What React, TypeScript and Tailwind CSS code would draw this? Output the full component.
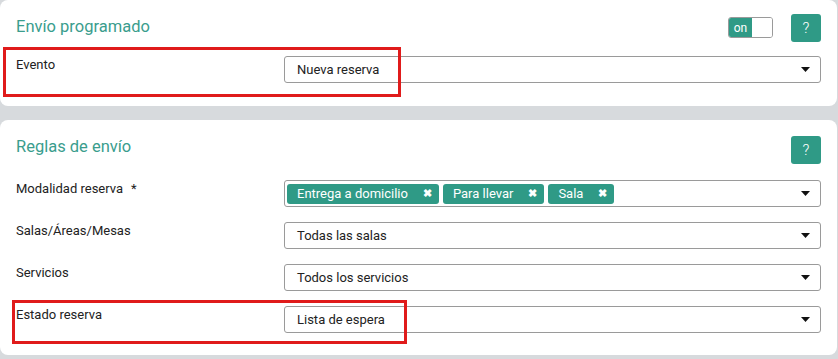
import React from "react";

const font = { fontFamily: "Roboto, 'Liberation Sans', sans-serif" };

function Caret() {
  return (
    <svg width="9" height="5" viewBox="0 0 9 5" className="shrink-0">
      <path d="M0 0 L9 0 L4.5 5 Z" fill="#111" />
    </svg>
  );
}

function Select({ value }: { value: string }) {
  return (
    <div className="flex-1 h-[27px] border border-[#9a9a9a] rounded-[3px] bg-white flex items-center pl-3 pr-[10px]">
      <span className="flex-1 text-[13px] text-[#222] pt-[1px]">{value}</span>
      <Caret />
    </div>
  );
}

function Tag({ text }: { text: string }) {
  return (
    <div className="h-[20px] bg-[#2f9a86] rounded-[3px] flex items-center pl-[10px] pr-[7px] gap-[15px] text-white text-[13px]">
      <span>{text}</span>
      <span className="text-[11px] font-bold leading-none">✖</span>
    </div>
  );
}

function HelpBtn() {
  return (
    <div className="w-[30px] h-[28px] bg-[#2f9a86] rounded-[3px] flex items-center justify-center text-white text-[15px] font-light">
      ?
    </div>
  );
}

function Row({ label, children, highlight }: { label: React.ReactNode; children: React.ReactNode; highlight?: "a" | "b" }) {
  return (
    <div className="relative flex items-start">
      <div className="w-[268px] text-[13px] leading-[17px] text-[#222]">{label}</div>
      {children}
      {highlight === "a" && (
        <div className="absolute left-[-13px] top-[-9px] w-[398px] h-[50px] border-[3px] border-[#e01b1b] pointer-events-none" />
      )}
      {highlight === "b" && (
        <div className="absolute left-[-4px] top-[-6px] w-[395px] h-[44px] border-[3px] border-[#e01b1b] pointer-events-none" />
      )}
    </div>
  );
}

export default function App() {
  return (
    <div className="w-[838px] h-[359px] bg-[#d7dadd] pr-[1px] flex flex-col gap-[14px]" style={font}>
      <div className="bg-white rounded-[8px] h-[106px] pt-[14px] pl-4 pr-4">
        <div className="flex items-start">
          <div className="flex-1 text-[16.5px] text-[#3a9d8d] pt-[1px]">Envío programado</div>
          <div className="mt-[3px] mr-[18px] w-[45px] h-[21px] rounded-[3px] border border-[#9a9a9a] flex overflow-hidden">
            <div className="w-[23px] bg-[#2f9a86] text-white text-[12px] flex items-center justify-center">on</div>
            <div className="flex-1 bg-white" />
          </div>
          <HelpBtn />
        </div>
        <div className="mt-[14px]">
          <Row label="Evento" highlight="a">
            <Select value="Nueva reserva" />
          </Row>
        </div>
      </div>
      <div className="bg-white rounded-[8px] h-[235px] pt-[16px] pl-4 pr-4">
        <div className="flex items-start">
          <div className="flex-1 text-[16.5px] text-[#3a9d8d] -mt-[1px]">Reglas de envío</div>
          <HelpBtn />
        </div>
        <div className="mt-[16px] flex flex-col gap-[15px]">
          <Row label={<>Modalidad reserva<span className="ml-[8px]">*</span></>}>
            <div className="flex-1 h-[27px] border border-[#9a9a9a] rounded-[3px] bg-white flex items-center pl-[2px] pr-[10px]">
              <div className="flex-1 flex items-center gap-[4px]">
                <Tag text="Entrega a domicilio" />
                <Tag text="Para llevar" />
                <Tag text="Sala" />
              </div>
              <Caret />
            </div>
          </Row>
          <Row label="Salas/Áreas/Mesas">
            <Select value="Todas las salas" />
          </Row>
          <Row label="Servicios">
            <Select value="Todos los servicios" />
          </Row>
          <Row label="Estado reserva" highlight="b">
            <Select value="Lista de espera" />
          </Row>
        </div>
      </div>
    </div>
  );
}
